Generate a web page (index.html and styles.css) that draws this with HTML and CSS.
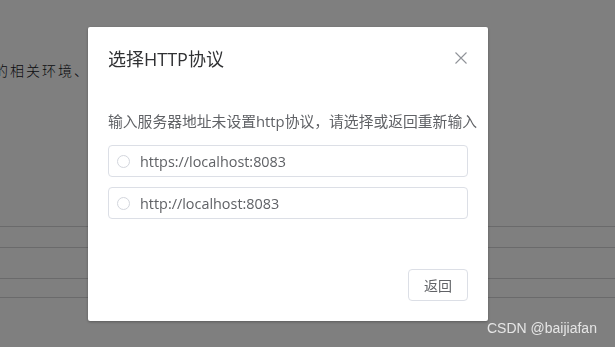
FILE: index.html
```html
<!DOCTYPE html>
<html lang="zh-CN">
<head>
  <meta charset="UTF-8" />
  <title>选择HTTP协议</title>
  <link rel="stylesheet" href="styles.css">
</head>
<body>
  <div class="page">
    <p class="page-text">的相关环境、配</p>
    <div class="page-rows">
      <div class="row row-a"></div>
      <div class="row row-b"></div>
      <div class="row row-c"></div>
      <div class="row row-d"></div>
    </div>
  </div>

  <div class="mask">
    <div class="dialog">
      <div class="dialog-header">
        <span class="dialog-title">选择HTTP协议</span>
        <button class="dialog-close" aria-label="关闭">
          <svg width="12" height="12" viewBox="0 0 12 12">
            <path d="M0.5 0.5 L11.5 11.5 M11.5 0.5 L0.5 11.5" stroke="#909399" stroke-width="1.1" fill="none"/>
          </svg>
        </button>
      </div>
      <div class="dialog-body">
        <p class="hint">输入服务器地址未设置http协议，请选择或返回重新输入</p>
        <label class="radio-box">
          <span class="radio-dot"></span>
          <span class="radio-label">https://localhost:8083</span>
        </label>
        <label class="radio-box">
          <span class="radio-dot"></span>
          <span class="radio-label">http://localhost:8083</span>
        </label>
      </div>
      <div class="dialog-footer">
        <button class="btn">返回</button>
      </div>
    </div>
  </div>

  <div class="watermark">CSDN @baijiafan</div>
</body>
</html>
```

FILE: styles.css
```css
body {
  margin: 0;
  background: #fff;
  font-family: "Open Sans", "Noto Sans CJK SC", sans-serif;
  overflow: hidden;
}

.page {
  height: 347px;
  padding-top: 60px;
  box-sizing: border-box;
}

.page-text {
  margin: 0 0 0 -6px;
  font-family: "Noto Sans CJK SC", sans-serif;
  font-size: 14px;
  letter-spacing: 2px;
  line-height: 20px;
  color: #14161c;
  font-weight: 300;
  white-space: nowrap;
}

.page-rows {
  margin-top: 146px;
}

.row {
  border-top: 1px solid #d4d4d6;
}

.row-a { height: 20px; }
.row-b { height: 30px; }
.row-c { height: 18px; }
.row-d { height: 40px; }

.mask {
  position: fixed;
  inset: 0;
  background: rgba(0, 0, 0, 0.5);
  padding: 27px 0 0 88px;
}

.dialog {
  width: 400px;
  background: #fff;
  border-radius: 2px;
  box-shadow: 0 1px 3px rgba(0,0,0,0.3);
}

.dialog-header {
  display: flex;
  justify-content: space-between;
  align-items: center;
  padding: 20px 20px 10px;
}

.dialog-title {
  font-size: 18px;
  line-height: 24px;
  color: #303133;
}

.dialog-close {
  border: none;
  background: none;
  padding: 0;
  margin-right: 1px;
  margin-top: -2px;
  display: flex;
  cursor: pointer;
}

.dialog-body {
  padding: 30px 20px 40px;
}

.hint {
  margin: 0 0 14px;
  font-size: 14.8px;
  line-height: 20px;
  color: #606266;
  white-space: nowrap;
}

.radio-box {
  display: flex;
  align-items: center;
  height: 30px;
  border: 1px solid #dcdfe6;
  border-radius: 4px;
  padding-left: 8px;
  margin-bottom: 10px;
  cursor: pointer;
}

.radio-box:last-child {
  margin-bottom: 0;
}

.radio-dot {
  width: 11px;
  height: 11px;
  border: 1px solid #d3d6dd;
  border-radius: 50%;
  margin-right: 10px;
}

.radio-label {
  font-size: 14.4px;
  color: #606266;
}

.dialog-footer {
  display: flex;
  justify-content: flex-end;
  padding: 10px 20px 20px;
}

.btn {
  width: 60px;
  height: 32px;
  border: 1px solid #dcdfe6;
  border-radius: 4px;
  background: #fff;
  color: #606266;
  font-family: "Noto Sans CJK SC", sans-serif;
  font-size: 14px;
  cursor: pointer;
}

.watermark {
  position: fixed;
  left: 487px;
  top: 320px;
  font-family: "Liberation Sans", Arial, sans-serif;
  font-size: 14px;
  color: rgba(255, 255, 255, 0.8);
}
```
